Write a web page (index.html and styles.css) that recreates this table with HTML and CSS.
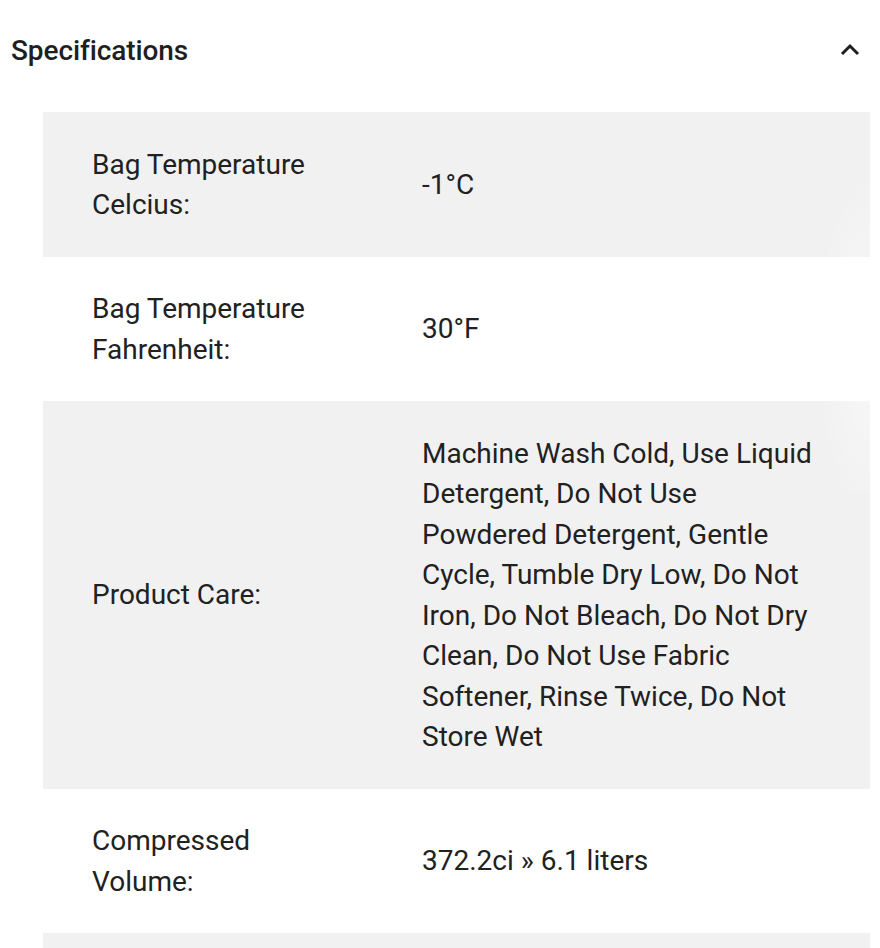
FILE: index.html
```html
<!DOCTYPE html>
<html>
<head>
<meta charset="utf-8">
<link rel="stylesheet" href="styles.css">
</head>
<body>
<section class="specs">
  <div class="specs-header">
    <h2 class="specs-title">Specifications</h2>
    <svg class="chevron" width="24" height="24" viewBox="0 0 24 24"><path d="M4 16 L12 8 L20 16" fill="none" stroke="#1f1f1f" stroke-width="3" stroke-linecap="butt" stroke-linejoin="miter"/></svg>
  </div>
  <div class="specs-body">
    <table class="spec-table">
      <colgroup><col class="col-label"><col class="col-value"></colgroup>
      <tr class="row-alt"><th>Bag Temperature Celcius:</th><td>-1°C</td></tr>
      <tr><th>Bag Temperature Fahrenheit:</th><td>30°F</td></tr>
      <tr class="row-alt"><th>Product Care:</th><td>Machine Wash Cold, Use Liquid Detergent, Do Not Use Powdered Detergent, Gentle Cycle, Tumble Dry Low, Do Not Iron, Do Not Bleach, Do Not Dry Clean, Do Not Use Fabric Softener, Rinse Twice, Do Not Store Wet</td></tr>
      <tr><th>Compressed Volume:</th><td>372.2ci » 6.1 liters</td></tr>
      <tr class="row-alt row-empty"><th></th><td></td></tr>
    </table>
    <div class="fade"></div>
  </div>
</section>
</body>
</html>
```
FILE: styles.css
```css
html, body {
  margin: 0;
  padding: 0;
  background: #ffffff;
}
body {
  font-family: Roboto, "Liberation Sans", sans-serif;
  color: #212121;
  overflow: hidden;
  height: 948px;
}
.specs-header {
  display: flex;
  align-items: center;
  justify-content: space-between;
  height: 100px;
  padding: 0 18px 0 11px;
}
.specs-title {
  margin: 0;
  font-size: 28px;
  font-weight: 500;
  color: #1f1f1f;
  letter-spacing: -0.1px;
}
.chevron {
  display: block;
}
.specs-body {
  position: relative;
  margin: 12px 10px 0 43px;
}
.spec-table {
  width: 827px;
  border-collapse: collapse;
  table-layout: fixed;
  font-size: 28px;
  line-height: 40.5px;
}
.col-label {
  width: 330px;
}
.col-value {
  width: 497px;
}
.spec-table th,
.spec-table td {
  text-align: left;
  font-weight: 400;
  vertical-align: middle;
  padding: 32.5px 49px 31px;
}
.row-alt {
  background: #f1f1f1;
}
.row-empty {
  height: 145px;
}
.fade {
  position: absolute;
  right: -10px;
  top: 20px;
  width: 110px;
  height: 360px;
  background: radial-gradient(ellipse 60% 50% at 100% 60%, rgba(255,255,255,0.6), rgba(255,255,255,0));
  pointer-events: none;
}
```
